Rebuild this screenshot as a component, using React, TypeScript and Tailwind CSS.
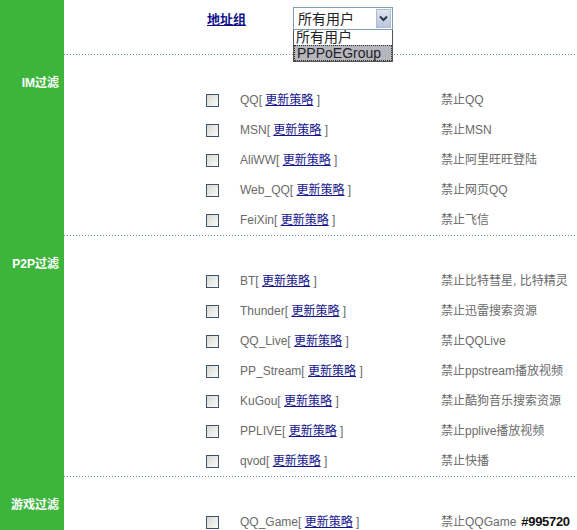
const sections = [
  {
    label: "IM过滤",
    items: [
      { name: "QQ", desc: "禁止QQ" },
      { name: "MSN", desc: "禁止MSN" },
      { name: "AliWW", desc: "禁止阿里旺旺登陆" },
      { name: "Web_QQ", desc: "禁止网页QQ" },
      { name: "FeiXin", desc: "禁止飞信" },
    ],
  },
  {
    label: "P2P过滤",
    items: [
      { name: "BT", desc: "禁止比特彗星, 比特精灵" },
      { name: "Thunder", desc: "禁止迅雷搜索资源" },
      { name: "QQ_Live", desc: "禁止QQLive" },
      { name: "PP_Stream", desc: "禁止ppstream播放视频" },
      { name: "KuGou", desc: "禁止酷狗音乐搜索资源" },
      { name: "PPLIVE", desc: "禁止pplive播放视频" },
      { name: "qvod", desc: "禁止快播" },
    ],
  },
  {
    label: "游戏过滤",
    items: [{ name: "QQ_Game", desc: "禁止QQGame", mark: "#995720" }],
  },
];

function CheckBox() {
  return (
    <span className="block w-[13px] h-[13px] border border-[#3c5470] bg-gradient-to-br from-[#d8d8d2] to-[#fbfbfa]" />
  );
}

function DottedLine() {
  return (
    <div className="h-px bg-[linear-gradient(to_right,#6f9a6f_1px,transparent_1px)] bg-[length:3px_1px] bg-repeat-x" />
  );
}

export default function App() {
  return (
    <div
      className="w-[577px] h-[530px] overflow-hidden bg-white text-[12px]"
      style={{ fontFamily: '"Liberation Sans", "Noto Sans CJK SC", sans-serif' }}
    >
      {/* Address group selector */}
      <div className="flex h-[54px]">
        <div className="w-[64px] shrink-0 bg-[#3db53d]" />
        <div className="flex-1 relative">
          <a className="absolute left-[143px] top-[10px] text-[13px] font-bold text-[#10108a] underline">
            地址组
          </a>
          <div className="absolute left-[229px] top-[7px] w-[100px] z-10">
            <div className="h-[23px] border border-[#7f9db9] bg-white flex items-center">
              <span className="flex-1 pl-[4px] text-[14px] text-[#222] leading-none">所有用户</span>
              <span className="w-[15px] h-[19px] mr-[1px] bg-gradient-to-b from-[#dfe5f0] to-[#b9c6dd] border border-[#b0bcd4] flex items-center justify-center">
                <svg width="9" height="7" viewBox="0 0 9 7">
                  <path d="M1 1.5 L4.5 5 L8 1.5" fill="none" stroke="#2a3550" strokeWidth="2" />
                </svg>
              </span>
            </div>
            <div className="border border-[#555] border-t-0 bg-white text-[14px] leading-[15px] text-[#222]">
              <div className="pl-[2px] h-[15px]">所有用户</div>
              <div className="pl-[2px] h-[16px] bg-[#b6b6be] border border-dotted border-[#333]">PPPoEGroup</div>
            </div>
          </div>
        </div>
      </div>

      {sections.map((section) => (
        <div key={section.label} className="flex">
          <div className="w-[64px] shrink-0 bg-[#3db53d] text-right pr-[5px] pt-[21px] text-white font-bold text-[12px] leading-[16px]">
            {section.label}
          </div>
          <div className="flex-1">
            <DottedLine />
            <div className="pt-[30px]">
              {section.items.map((item) => (
                <div key={item.name} className="h-[30px] flex items-center pl-[142px]">
                  <CheckBox />
                  <div className="w-[201px] ml-[21px] text-[#6a6a6a]">
                    {item.name}[{" "}
                    <a className="text-[#14148c] underline">更新策略</a> ]
                  </div>
                  <div className="text-[#6a6a6a] flex items-center">
                    {item.desc}
                    {"mark" in item && (
                      <span className="ml-[5px] text-[13px] font-bold text-[#111] tracking-tight">
                        {item.mark}
                      </span>
                    )}
                  </div>
                </div>
              ))}
            </div>
          </div>
        </div>
      ))}
    </div>
  );
}
